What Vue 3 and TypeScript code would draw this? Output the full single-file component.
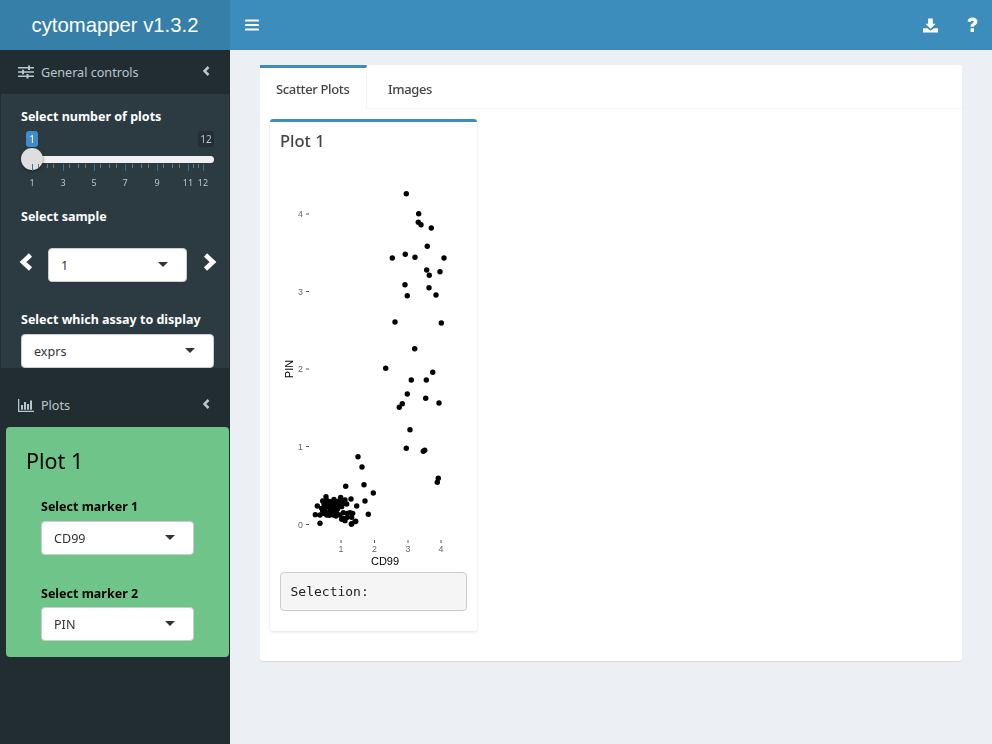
<template>
  <div class="app">
    <header class="topbar">
      <div class="logo">cytomapper v1.3.2</div>
      <div class="navbar">
        <svg class="nav-icon" width="14" height="12" viewBox="0 0 14 12"><path d="M1 1.500h12M1 6h12M1 10.500h12" stroke="#fff" stroke-width="2.200" stroke-linecap="round" /></svg>
        <div class="nav-right">
          <svg width="15" height="15" viewBox="0 0 16 15"><path d="M5.500 0h5v5.500h3L8 11 2.500 5.500h3zM0 10.500h4.500L8 13l3.500-2.500H16V15H0z" fill="#fff" /></svg>
          <svg width="11" height="16" viewBox="0 0 11 16"><path d="M.6 4.600C.6 2 2.900.6 5.300.6 8 .6 10.400 2.200 10.400 4.700c0 3.100-3.400 3.100-3.400 5H3.600c0-3.500 3.200-3.500 3.200-4.900 0-.7-.7-1.100-1.600-1.100-.9 0-1.400.5-1.600 1.400zM3.600 11.200H7V15H3.600z" fill="#fff" /></svg>
        </div>
      </div>
    </header>
    <div class="body">
      <aside class="sidebar">
        <div class="menu-row">
          <svg class="menu-icon" width="16" height="14" viewBox="0 0 16 14"><path d="M0 2h16v1.600H0zM0 6.200h16v1.600H0zM0 10.400h16V12H0z" fill="#b8c7ce" /><path d="M10 .5h2v4.600h-2zM4 4.700h2v4.600H4zM8.500 8.900h2v4.600h-2z" fill="#b8c7ce" /></svg>
          <span>General controls</span>
          <svg class="chev" width="7" height="10" viewBox="0 0 7 10"><path d="M5.500 1 1.500 5l4 4" fill="none" stroke="#b8c7ce" stroke-width="2.500" /></svg>
        </div>
        <section class="controls">
          <div class="label first">Select number of plots</div>
          <div class="slider">
            <span class="tag tag-from">1</span>
            <span class="tag tag-to">12</span>
            <div class="track"></div>
            <div class="handle"></div>
            <i v-for="t in minorTicks" :key="t" class="tick" :style="{ left: t + 'px' }"></i>
            <i v-for="l in sliderLabels" :key="l.text" class="tick major" :style="{ left: l.x + 'px' }"></i>
            <span v-for="l in sliderLabels" :key="l.text + 'l'" class="tick-label" :style="{ left: l.x + 'px' }">{{ l.text }}</span>
          </div>
          <div class="label sample">Select sample</div>
          <div class="sample-row">
            <svg class="arrow" width="14" height="18" viewBox="0 0 14 18"><path d="M11.500 2 4 9l7.500 7" fill="none" stroke="#fff" stroke-width="4.600" /></svg>
            <div class="select grow"><span>1</span><b class="caret"></b></div>
            <svg class="arrow" width="14" height="18" viewBox="0 0 14 18"><path d="m2.500 2 7.500 7-7.500 7" fill="none" stroke="#fff" stroke-width="4.600" /></svg>
          </div>
          <div class="label assay">Select which assay to display</div>
          <div class="select"><span>exprs</span><b class="caret"></b></div>
        </section>
        <div class="menu-row plots">
          <svg class="menu-icon" width="16" height="13" viewBox="0 0 16 13"><path d="M0 0h1.300v11.700H16V13H0z" fill="#b8c7ce" /><path d="M3 6h2v4.700H3zM6 3h2v7.700H6zM9 5h2v5.700H9zM12 1.500h2v9.200h-2z" fill="#b8c7ce" /></svg>
          <span>Plots</span>
          <svg class="chev" width="7" height="10" viewBox="0 0 7 10"><path d="M5.500 1 1.500 5l4 4" fill="none" stroke="#b8c7ce" stroke-width="2.500" /></svg>
        </div>
        <div class="green">
          <h2>Plot 1</h2>
          <div class="marker">
            <div class="label dark">Select marker 1</div>
            <div class="select"><span>CD99</span><b class="caret"></b></div>
            <div class="label dark second">Select marker 2</div>
            <div class="select"><span>PIN</span><b class="caret"></b></div>
          </div>
        </div>
      </aside>
      <main class="content">
        <div class="tabbox">
          <nav class="tabs">
            <div class="tab active">Scatter Plots</div>
            <div class="tab">Images</div>
          </nav>
          <div class="tab-body">
            <div class="plot-box">
              <h3>Plot 1</h3>
              <svg class="scatter" width="187" height="415" viewBox="280 157 187 415">
                <g v-for="t in yTicks" :key="t.label">
                  <line x1="306" x2="309" :y1="t.y" :y2="t.y" stroke="#555" stroke-width="1" />
                  <text x="303" :y="t.y + 3" text-anchor="end" class="tick-text">{{ t.label }}</text>
                </g>
                <g v-for="t in xTicks" :key="t.label">
                  <line :x1="t.x" :x2="t.x" y1="540" y2="543" stroke="#555" stroke-width="1" />
                  <text :x="t.x" y="552" text-anchor="middle" class="tick-text">{{ t.label }}</text>
                </g>
                <text x="385" y="565" text-anchor="middle" class="axis-text">CD99</text>
                <text x="0" y="0" transform="translate(293 369) rotate(-90)" text-anchor="middle" class="axis-text">PIN</text>
                <circle v-for="(p, i) in points" :key="i" :cx="p[0]" :cy="p[1]" r="2.700" fill="#000" />
              </svg>
              <pre class="selection">Selection:</pre>
            </div>
          </div>
        </div>
      </main>
    </div>
  </div>
</template>

<script setup lang="ts">
const minorTicks = [38, 47, 53, 69, 78, 85, 100, 109, 116, 132, 141, 148, 163, 172, 179, 193, 198]
const sliderLabels = [
  { text: '1', x: 32 },
  { text: '3', x: 63 },
  { text: '5', x: 94 },
  { text: '7', x: 125 },
  { text: '9', x: 157 },
  { text: '11', x: 188 },
  { text: '12', x: 203 }
]

const yTicks = [
  { label: '0', y: 524.5 },
  { label: '1', y: 446.5 },
  { label: '2', y: 369 },
  { label: '3', y: 291.5 },
  { label: '4', y: 214 }
]
const xTicks = [
  { label: '1', x: 341 },
  { label: '2', x: 374.5 },
  { label: '3', x: 408 },
  { label: '4', x: 441 }
]

// read off the reference, in page pixels
const upper: number[][] = [
  [406.3, 193.7], [418.7, 213.7], [418.3, 222.3], [421, 224.7], [431.3, 228], [427.3, 246.3],
  [392.3, 258], [405.3, 254.3], [415, 257.3], [444, 258], [426.7, 270], [429.3, 275.3],
  [440, 271.7], [405, 284.7], [429, 287.7], [407.3, 295.7], [436, 295], [395, 322],
  [441.3, 323], [414.7, 348.7], [385.7, 368.3], [432.7, 372.3], [411.3, 380], [426.3, 380],
  [407.3, 394], [425.7, 398.3], [439, 403], [402.3, 403.7], [399.3, 407.3], [410, 429.7],
  [406.3, 448.3], [424.7, 450.3], [423.3, 451.3], [358, 456.7], [362, 467], [438.3, 478.3],
  [437.3, 482.3], [345.7, 486.3], [364, 484.7], [373.3, 493], [365, 501], [368.3, 514.3],
  [356.7, 506], [351, 499], [320, 523.3], [355.7, 521.3], [351.3, 524]
]
// crowded corner near the origin, from the 3x crop at (310, 480)
const cluster: number[][] = [
  [16, 104], [22, 78], [48, 50], [38, 63], [72, 58], [92, 52], [105, 60], [110, 72], [30, 105],
  [45, 90], [55, 75], [65, 70], [75, 85], [60, 95], [70, 105], [80, 100], [40, 100], [50, 105],
  [85, 75], [95, 80], [100, 98], [120, 98], [128, 100], [125, 112], [95, 118], [105, 122],
  [100, 115], [135, 125], [125, 132], [112, 100], [68, 88], [52, 62], [80, 65], [35, 85],
  [90, 105], [60, 85], [48, 80], [60, 65], [42, 72], [75, 72], [72, 95], [55, 100], [82, 88],
  [38, 92], [66, 78], [58, 106], [46, 68], [104, 70], [98, 66], [88, 62], [78, 108], [112, 112]
]
const points = [...upper, ...cluster.map(p => [310 + p[0] / 3, 480 + p[1] / 3])]
</script>

<style>
html, body {
  margin: 0;
  background: #ecf0f5;
}
</style>

<style scoped>
.app {
  width: 992px;
  height: 744px;
  overflow: hidden;
  opacity: 0.999;
  font-family: "Noto Sans", "Open Sans", sans-serif;
  font-size: 14px;
  color: #333;
}

.topbar {
  display: flex;
  height: 50px;
  background: #3c8dbc;
}

.logo {
  width: 230px;
  background: #367fa9;
  color: #fff;
  font-family: "Liberation Sans", Arial, sans-serif;
  font-size: 20.300px;
  line-height: 50px;
  text-align: center;
}

.navbar {
  flex: 1;
  display: flex;
  align-items: center;
  justify-content: space-between;
  padding: 0 14px 0 15px;
}

.nav-right {
  display: flex;
  align-items: center;
  gap: 29px;
}

.body {
  display: flex;
  height: 694px;
}

.sidebar {
  width: 230px;
  background: #222d32;
}

.menu-row {
  display: flex;
  align-items: center;
  height: 44px;
  padding: 0 20px 0 18px;
  color: #b8c7ce;
  font-size: 12.600px;
}

.menu-row span {
  margin-left: 7px;
  flex: 1;
}

.menu-row.plots {
  height: 59px;
  padding-top: 15px;
  box-sizing: border-box;
}

.chev {
  margin-top: -3px;
}

.controls {
  height: 274px;
  box-sizing: border-box;
  margin: 0 1px;
  padding: 0 15px 0 20px;
  background: #2c3b41;
  overflow: hidden;
}

.label {
  color: #fff;
  font-size: 12.500px;
  font-weight: 700;
  line-height: 18px;
}

.label.first {
  padding-top: 14px;
  margin-bottom: 5px;
}

.label.sample {
  margin-top: 11px;
}

.label.assay {
  margin-top: 29px;
  margin-bottom: 5px;
}

.label.dark {
  color: #000;
  margin-bottom: 5px;
}

.label.second {
  margin-top: 30px;
  margin-bottom: 4px;
}

.slider {
  position: relative;
  height: 66px;
  margin: 0 -15px 0 -21px;
}

.tag {
  position: absolute;
  top: 0;
  height: 16px;
  border-radius: 3px;
  color: #fff;
  font-size: 10px;
  line-height: 16px;
  text-align: center;
}

.tag-from {
  left: 26px;
  width: 12px;
  background: #428bca;
}

.tag-to {
  left: 198px;
  width: 16px;
  background: rgba(0, 0, 0, 0.2);
  color: #b8c7ce;
}

.track {
  position: absolute;
  left: 32px;
  top: 25px;
  width: 182px;
  height: 7px;
  border-radius: 4px;
  background: #f1f1f1;
}

.handle {
  position: absolute;
  left: 21px;
  top: 17px;
  width: 22px;
  height: 22px;
  border-radius: 50%;
  background: #dedede;
  box-shadow: 0 1px 3px rgba(0, 0, 0, 0.5);
}

.tick {
  position: absolute;
  top: 33px;
  width: 1px;
  height: 4px;
  background: #6a7b83;
}

.tick.major {
  height: 7px;
  background: #3d6f93;
}

.tick-label {
  position: absolute;
  top: 45px;
  transform: translateX(-50%);
  color: #b8c7ce;
  font-size: 9px;
  line-height: 14px;
}

.sample-row {
  display: flex;
  align-items: center;
  margin: 22px -3px 0 -2px;
}

.arrow {
  margin-top: -6px;
}

.select {
  display: flex;
  align-items: center;
  justify-content: space-between;
  height: 34px;
  box-sizing: border-box;
  padding: 0 18px 0 12px;
  background: #fff;
  border: 1px solid #ccc;
  border-radius: 4px;
  color: #333;
  font-size: 12.600px;
}

.select.grow {
  width: 139px;
  margin: 0 auto 0 15px;
}

.caret {
  width: 0;
  height: 0;
  border-left: 5px solid transparent;
  border-right: 5px solid transparent;
  border-top: 5px solid #333;
  margin-top: -2px;
}

.green {
  height: 230px;
  box-sizing: border-box;
  margin: 0 1px 0 6px;
  padding: 20px 20px 0;
  background: #6fc589;
  border-radius: 4px;
  color: #000;
}

.green h2 {
  margin: 0;
  font-size: 21.500px;
  font-weight: 400;
  line-height: 28px;
}

.marker {
  width: 153px;
  margin: 23px 0 0 15px;
}

.content {
  flex: 1;
  padding: 15px 30px 0;
}

.tabbox {
  height: 596px;
  background: #fff;
  border-radius: 3px;
  box-shadow: 0 1px 1px rgba(0, 0, 0, 0.1);
}

.tabs {
  display: flex;
  height: 44px;
  box-sizing: border-box;
  border-bottom: 1px solid #f4f4f4;
}

.tab {
  padding: 3px 21px 0;
  font-size: 13px;
  font-weight: 500;
  letter-spacing: -0.35px;
  line-height: 43px;
  white-space: nowrap;
  color: #444;
}

.tab.active {
  width: 107px;
  box-sizing: border-box;
  padding: 0 16px;
  border-top: 3px solid #3c8dbc;
  border-right: 1px solid #f4f4f4;
  height: 44px;
  background: #fff;
}

.tab-body {
  padding: 10px;
}

.plot-box {
  width: 207px;
  height: 512px;
  box-sizing: border-box;
  border-top: 3px solid #3c8dbc;
  border-radius: 3px;
  box-shadow: 0 1px 3px rgba(0, 0, 0, 0.12);
  padding: 0 10px;
}

.plot-box h3 {
  margin: 0;
  padding-top: 8px;
  color: #444;
  font-size: 16.500px;
  font-weight: 500;
  line-height: 22px;
  height: 35px;
  box-sizing: border-box;
}

.scatter {
  display: block;
}

.tick-text {
  font-family: "Liberation Sans", Arial, sans-serif;
  font-size: 8.800px;
  fill: #666;
}

.axis-text {
  font-family: "Liberation Sans", Arial, sans-serif;
  font-size: 11px;
  fill: #000;
}

.selection {
  margin: 0;
  height: 39px;
  box-sizing: border-box;
  padding: 0 9.500px;
  background: #f5f5f5;
  border: 1px solid #ccc;
  border-radius: 4px;
  font-family: "DejaVu Sans Mono", "Liberation Mono", monospace;
  font-size: 13px;
  font-weight: 500;
  line-height: 37px;
  color: #222;
}
</style>
